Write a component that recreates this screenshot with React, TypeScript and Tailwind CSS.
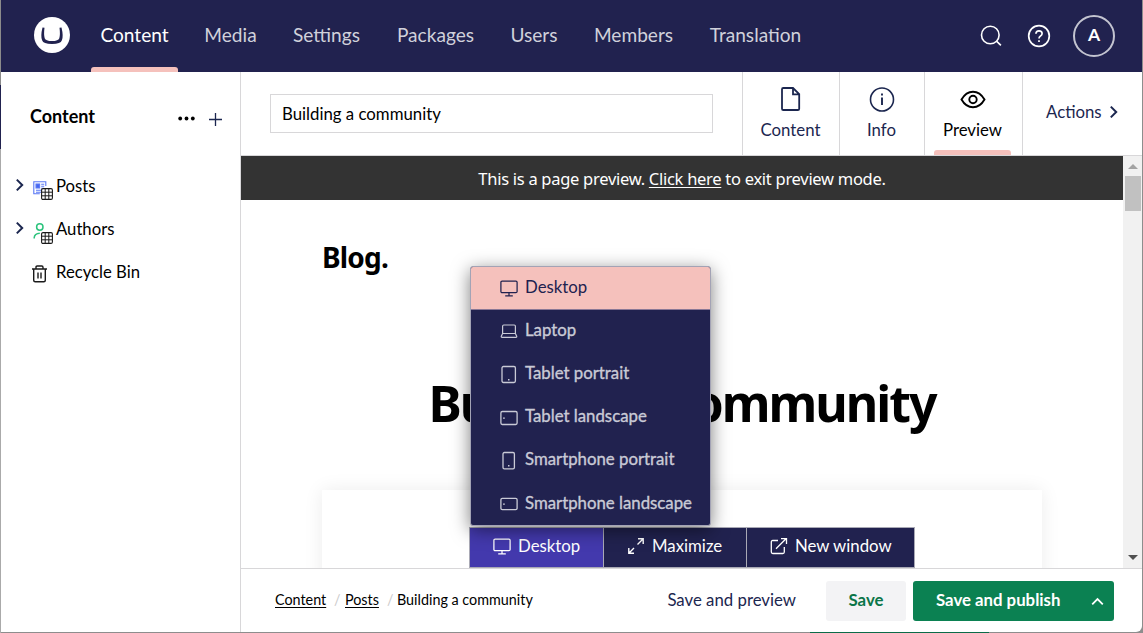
import React from 'react';

const nav = [
  { label: 'Content', w: 'w-[87px]', active: true },
  { label: 'Media', w: 'w-[70px]' },
  { label: 'Settings', w: 'w-[86px]' },
  { label: 'Packages', w: 'w-[96px]' },
  { label: 'Users', w: 'w-[65px]' },
  { label: 'Members', w: 'w-[98px]' },
  { label: 'Translation', w: 'w-[110px]' },
];

function Chevron({ className }: { className: string }) {
  return (
    <svg viewBox="0 0 10 14" className={className} fill="none" stroke="#1b264f" strokeWidth="2">
      <path d="M1.8 1.6L7.2 7l-5.4 5.4" />
    </svg>
  );
}

function Monitor() {
  return (
    <svg width="18" height="17" viewBox="0 0 18 17" fill="none" stroke="currentColor" strokeWidth="1.25" className="shrink-0">
      <rect x="0.9" y="1" width="16.2" height="11.6" rx="1.2" />
      <path d="M9 12.6v3M5.2 15.8h7.6" />
    </svg>
  );
}

function Laptop() {
  return (
    <svg width="18" height="18" viewBox="0 0 18 18" fill="none" stroke="currentColor" strokeWidth="1.2" className="shrink-0">
      <path d="M2.6 11.5V4.2q0-1.2 1.2-1.2h10.4q1.2 0 1.2 1.2v7.3M2.6 11.5h12.8l1.3 2.8q.2 1-.8 1H2.1q-1 0-.8-1z" />
    </svg>
  );
}

function Device({ kind }: { kind: 'tp' | 'tl' | 'sp' | 'sl' }) {
  const box = {
    tp: { x: 2, y: 1.5, w: 13.4, h: 16, dx: 8, dy: 14 },
    tl: { x: 0.9, y: 3.5, w: 16.2, h: 13, dx: 3.2, dy: 9.4 },
    sp: { x: 3, y: 1.5, w: 11.4, h: 16.4, dx: 8, dy: 14 },
    sl: { x: 0.9, y: 4.3, w: 16.2, h: 11.4, dx: 3.2, dy: 9.4 },
  }[kind];
  return (
    <svg width="18" height="19" viewBox="0 0 18 19" fill="none" stroke="currentColor" strokeWidth="1.3" className="shrink-0">
      <rect x={box.x} y={box.y} width={box.w} height={box.h} rx="1.4" />
      <rect x={box.dx} y={box.dy} width="1.5" height="1.5" fill="currentColor" stroke="none" />
    </svg>
  );
}

function Grid() {
  return (
    <svg width="12" height="12" viewBox="0 0 12 12" className="absolute left-[8px] top-[7px]">
      <rect x="0.6" y="0.6" width="10.8" height="10.8" rx="1.4" fill="#fff" stroke="#1a1a1a" strokeWidth="1.1" />
      <path d="M4.2 0.6v10.8M7.8 0.6v10.8M0.6 4.2h10.8M0.6 7.8h10.8" stroke="#1a1a1a" strokeWidth="1" />
    </svg>
  );
}

function Header() {
  return (
    <header className="flex h-[72px] shrink-0 bg-[#21224f] pl-[33px]">
      <svg width="38" height="38" viewBox="0 0 38 38" className="mt-4 shrink-0">
        <circle cx="18" cy="19" r="18" fill="#fff" />
        <path d="M8.5 11.4Q6.4 20 8.1 24.2Q9.2 28 18 28Q26.8 28 27.9 24.2Q29.6 20 27.5 11.4L25.5 11.7Q26.4 18.5 25.3 22.2Q24.4 25 18 25Q11.6 25 10.7 22.2Q9.6 18.5 10.5 11.7z" fill="#21224f" />
      </svg>
      <nav className="ml-[19px] flex gap-[18px]">
        {nav.map((n) => (
          <div key={n.label} className={`${n.w} flex flex-col items-center justify-between whitespace-nowrap text-[19.1px] ${n.active ? 'text-white' : 'text-[#d0d1db]'}`}>
            <span className={`mt-[21px] leading-7 ${n.active ? '' : '-translate-x-[0.5px]'}`}>{n.label}</span>
            {n.active && <span className="h-[5px] w-full rounded-t-[3px] bg-[#f5c1bc]" />}
          </div>
        ))}
      </nav>
      <div className="ml-auto flex items-center pr-[27px] text-white">
        <svg width="22" height="22" viewBox="0 0 22 22" fill="none" stroke="#fff" strokeWidth="1.6">
          <circle cx="10.3" cy="10" r="8.8" />
          <path d="M16.5 16.2l4.4 4.2" />
        </svg>
        <svg width="24" height="24" viewBox="0 0 24 24" fill="none" stroke="#fff" strokeWidth="1.7" className="ml-[25px]">
          <circle cx="12" cy="12" r="10.3" />
          <path d="M8.9 9.8Q9 6.8 12 6.8Q15.1 6.8 15.1 9.5Q15.1 11 13.5 11.9Q12 12.8 12 14.4M12 16.2v1.9" />
        </svg>
        <div className="ml-[22px] flex size-[42px] items-center justify-center rounded-full border-2 border-[#c3c4d0] pb-px text-[17.5px] font-bold">A</div>
      </div>
    </header>
  );
}

function Sidebar() {
  return (
    <aside className="w-[240px] shrink-0 border-r border-[#d8d7d9] text-[16.7px] text-black">
      <div className="flex h-[93px] items-center pl-[29px]">
        <span className="-mt-[4px] w-[148px] text-[18px] font-bold">Content</span>
        <svg width="17" height="5" viewBox="0 0 17 5" className="-mt-px">
          <circle cx="2.2" cy="2.5" r="1.9" />
          <circle cx="8.5" cy="2.5" r="1.9" />
          <circle cx="14.8" cy="2.5" r="1.9" />
        </svg>
        <svg width="13" height="13" viewBox="0 0 13 13" className="ml-[14px] mt-[2px]" stroke="#1b264f" strokeWidth="1.3">
          <path d="M6.5 0v13M0 6.5h13" />
        </svg>
      </div>
      <div className="flex h-[43px] items-center pl-[14px]">
        <Chevron className="h-[14px] w-[10px] -mt-[3px]" />
        <div className="relative ml-[8px] mt-[3px] h-[15px] w-[23px]">
          <svg width="14" height="14" viewBox="0 0 14 14" fill="none" stroke="#5a78f5" strokeWidth="1.1">
            <path d="M12.8 5V.8H.8v12h6" />
            <rect x="3" y="3" width="3.6" height="4" fill="#4767f0" />
            <path d="M8.2 3.2h3M8.2 5.2h3M8.2 7.2h3M3 9.3h5M3 11.3h5" />
          </svg>
          <Grid />
        </div>
        <span>Posts</span>
      </div>
      <div className="flex h-[43px] items-center pl-[14px]">
        <Chevron className="h-[14px] w-[10px] -mt-[3px]" />
        <div className="relative ml-[8px] mt-[5px] h-[15px] w-[23px]">
          <svg width="14" height="17" viewBox="0 0 14 17" fill="none" stroke="#2bc37c" strokeWidth="1.5" className="-mt-[2px]">
            <circle cx="6.8" cy="4" r="3.2" />
            <path d="M1.2 15.6v-1Q1.5 10.7 6.8 10.3" />
          </svg>
          <Grid />
        </div>
        <span>Authors</span>
      </div>
      <div className="flex h-[43px] items-center pl-[30px]">
        <svg width="17" height="18" viewBox="0 0 16 18" fill="none" stroke="#1a1a1a" strokeWidth="1.4" className="mt-[3px]">
          <path d="M0.5 4h15M4.5 3.8V2.2q0-1.2 1.2-1.2h4.6q1.2 0 1.2 1.2v1.6M2.2 4v11.3q0 1.5 1.5 1.5h8.6q1.5 0 1.5-1.5V4M6.5 7.5v6M9.5 7.5v6" />
        </svg>
        <span className="ml-[8px]">Recycle Bin</span>
      </div>
    </aside>
  );
}

function EditorHeader() {
  return (
    <div className="flex h-[84px] shrink-0 border-b border-[#d8d7d9] text-[16.8px] text-[#1b264f]">
      <div className="ml-[29px] mt-[22px] flex h-[39px] w-[443px] items-center border border-[#d8d7d9] pl-[11px] text-[16.8px] text-black">Building a community</div>
      <div className="ml-[29px] flex w-[97px] flex-col items-center border-l border-[#d8d7d9] pr-px">
        <svg width="22" height="26" viewBox="0 0 22 26" fill="none" stroke="#1b264f" strokeWidth="1.8" className="mt-[14px]">
          <path d="M3.3 2h9.7l6.2 6.2v14.5q0 1.3-1.3 1.3H3.3q-1.3 0-1.3-1.3V3.3q0-1.3 1.3-1.3zM13 2v6.4h6" />
        </svg>
        <span className="mt-[6px] leading-6">Content</span>
      </div>
      <div className="flex w-[85px] flex-col items-center border-l border-[#d8d7d9] pr-px">
        <svg width="26" height="26" viewBox="0 0 26 26" fill="none" stroke="#1b264f" strokeWidth="1.6" className="mt-[14px]">
          <circle cx="13" cy="13.5" r="11.5" />
          <path d="M13 11.5v7.5M13 7.5v2" strokeWidth="1.9" />
        </svg>
        <span className="mt-[6px] leading-6">Info</span>
      </div>
      <div className="flex w-[98px] flex-col items-center border-l border-[#d8d7d9] pr-[2px] text-black">
        <svg width="26" height="26" viewBox="0 0 26 26" fill="none" stroke="#000" strokeWidth="1.9" className="mt-[14px]">
          <path d="M1.5 13.5Q6 5.7 13 5.7T24.5 13.5Q20 21.3 13 21.3T1.5 13.5z" />
          <circle cx="13" cy="13.5" r="3.7" />
        </svg>
        <span className="mt-[6px] leading-6">Preview</span>
        <span className="mt-auto h-[5px] w-[77px] rounded-t-[3px] bg-[#f5c1bc]" />
      </div>
      <div className="flex flex-1 items-center border-l border-[#d8d7d9] pb-[3px] pl-[23px]">
        <span className="w-[63px]">Actions</span>
        <Chevron className="-mt-px h-[14px] w-[10px]" />
      </div>
    </div>
  );
}

const devices: { label: string; icon: React.ReactNode }[] = [
  { label: 'Laptop', icon: <Laptop /> },
  { label: 'Tablet portrait', icon: <Device kind="tp" /> },
  { label: 'Tablet landscape', icon: <Device kind="tl" /> },
  { label: 'Smartphone portrait', icon: <Device kind="sp" /> },
  { label: 'Smartphone landscape', icon: <Device kind="sl" /> },
];

function DeviceMenu() {
  return (
    <div className="absolute bottom-[42px] left-px h-[260px] w-[241px] rounded-[3px] border border-[#a3a3b5] bg-[#21224f] text-[16.8px] text-[#c9cad6] shadow-[0_4px_18px_rgba(0,0,0,0.5)]">
      <div className="flex h-[43px] items-center gap-[7px] rounded-t-[2px] border-b border-[#8a7896] bg-[#f5c1bc] pb-px pl-[29px] text-[#21224f]">
        <span className="mt-[2px]"><Monitor /></span>
        <span className="-mt-[2px]">Desktop</span>
      </div>
      {devices.map((d) => (
        <div key={d.label} className="flex h-[43.2px] items-center gap-[7px] whitespace-nowrap pb-[3px] pl-[29px]">
          <span className="mt-[2px]">{d.icon}</span>
          <span className="-mt-[1.2px] [-webkit-text-stroke:0.35px_#c9cad6]">{d.label}</span>
        </div>
      ))}
    </div>
  );
}

function Preview() {
  return (
    <div className="flex h-[412px] shrink-0">
      <div className="relative flex-1 overflow-hidden bg-white font-['Noto_Sans',sans-serif] text-black">
        <div className="flex h-[44px] items-center justify-center bg-[#333] pt-[3px] text-[16.5px] text-white">
          <p className="whitespace-nowrap tracking-[-0.28px]">This is a page preview. <u className="decoration-1 underline-offset-2">Click here</u> to exit preview mode.</p>
        </div>
        <div className="ml-[81px] mt-[37px] h-[40px] text-[28px] font-bold leading-10 tracking-[-0.8px]">Blog.</div>
        <h1 className="mt-[91px] h-[70px] whitespace-nowrap text-center text-[50px] font-bold leading-[70px] tracking-[-2px]">Building a community</h1>
        <div className="mx-auto mt-[52px] h-[200px] w-[720px] bg-white shadow-[0_0_18px_rgba(0,0,0,0.08)]" />
        <div className="absolute bottom-0 left-[228px] flex h-[41px] w-[446px] border border-[#a9a9b5] bg-[#21224f] font-['Lato',sans-serif] text-[16.8px] text-white">
          <div className="flex w-[134px] items-center gap-[7px] border-r border-[#a9a9b5] bg-[#4339ad] pb-[3px] pl-[23px]">
            <Monitor />
            <span className="-mt-px">Desktop</span>
          </div>
          <div className="flex w-[143px] items-center gap-[7px] border-r border-[#a9a9b5] pb-[3px] pl-[23px]">
            <svg width="18" height="18" viewBox="0 0 18 18" fill="none" stroke="#fff" strokeWidth="1.4">
              <path d="M10.5 7.5L16 2M11 1.8h5.2V7M7 11l-5.5 5.5M1.8 11v5.2H7" />
            </svg>
            <span className="-mt-px">Maximize</span>
          </div>
          <div className="flex flex-1 items-center gap-[7px] pb-[3px] pl-[23px]">
            <svg width="18" height="18" viewBox="0 0 18 18" fill="none" stroke="#fff" strokeWidth="1.3">
              <path d="M8 3.5H2.8Q1.3 3.5 1.3 5v10q0 1.5 1.5 1.5h10q1.5 0 1.5-1.5v-5M6 11.8L16 1.8M11 1.6h5.5V7" />
            </svg>
            <span className="-mt-px whitespace-nowrap">New window</span>
          </div>
        </div>
        <div className="absolute bottom-0 left-[228px] font-['Lato',sans-serif]">
          <DeviceMenu />
        </div>
      </div>
      <div className="flex w-[19px] flex-col items-center justify-between bg-[#f1f1f1]">
        <div className="flex flex-col items-center pt-[8px]">
          <svg width="10" height="5" viewBox="0 0 10 5"><path d="M0 5l5-5 5 5z" fill="#a3a3a3" /></svg>
          <div className="mt-[7px] h-[35px] w-[16px] bg-[#c1c1c1]" />
        </div>
        <svg width="10" height="5" viewBox="0 0 10 5" className="mb-[8px]"><path d="M0 0l5 5 5-5z" fill="#505050" /></svg>
      </div>
    </div>
  );
}

function Footer() {
  return (
    <div className="flex flex-1 border-t border-[#d8d7d9] pr-[28px] text-black">
      <div className="flex h-[62px] items-center pl-[34px] text-[14.35px]">
        <u className="w-[59px] whitespace-nowrap decoration-1 underline-offset-2">Content</u>
        <span className="w-[11px] text-[#ccc]">/</span>
        <u className="w-[42px] whitespace-nowrap decoration-1 underline-offset-2">Posts</u>
        <span className="w-[10px] text-[#ccc]">/</span>
        <span className="whitespace-nowrap">Building a community</span>
      </div>
      <div className="ml-auto flex pt-[12px] text-[16.8px]">
        <div className="mr-[30px] flex h-[40px] items-center whitespace-nowrap pb-[2px] text-[#1b264f]">Save and preview</div>
        <div className="mr-[7px] flex h-[40px] w-[80px] items-center justify-center rounded-[3px] bg-[#f3f3f5] pb-[2px] font-bold text-[#0b7548]">Save</div>
        <div className="flex h-[40px] w-[201px] items-center rounded-[3px] bg-[#0b8152] pl-[23px] font-bold text-white">
          <span className="w-[155px] whitespace-nowrap pb-[2px]">Save and publish</span>
          <svg width="13" height="9" viewBox="0 0 13 9" fill="none" stroke="#fff" strokeWidth="1.8"><path d="M1.2 7.3l5.3-5.3 5.3 5.3" /></svg>
        </div>
      </div>
    </div>
  );
}

export default function App() {
  return (
    <div className="flex h-[633px] w-[1143px] overflow-hidden bg-[#8d8d8d] font-['Lato',sans-serif]">
      <div className="flex w-px shrink-0 flex-col bg-[#aaa]">
        <div className="h-[85px] bg-[#8b8b8b]" />
        <div className="h-[64px] bg-[#21224f]" />
      </div>
      <div className="flex w-[1141px] flex-col">
        <div className="flex h-[632px] flex-col overflow-hidden rounded-br-[6px] bg-white">
          <Header />
          <div className="flex min-h-0 flex-1">
            <Sidebar />
            <main className="flex min-w-0 flex-1 flex-col">
              <EditorHeader />
              <Preview />
              <Footer />
            </main>
          </div>
        </div>
        <div className="ml-[809px] h-px w-[179px] bg-[#0b6b48]" />
      </div>
    </div>
  );
}
